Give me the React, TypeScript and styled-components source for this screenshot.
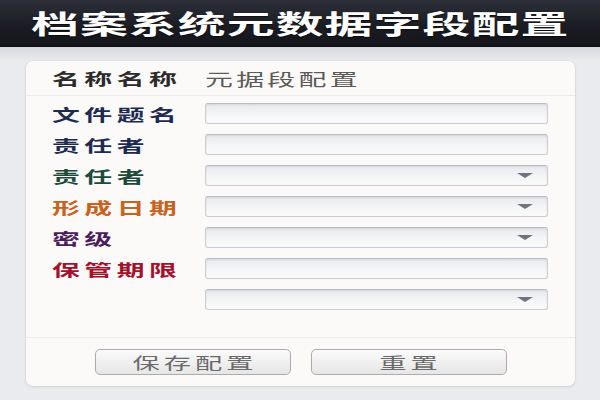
import React from "react";
import styled, { createGlobalStyle } from "styled-components";

const FONT = `"Noto Sans CJK SC", "Noto Sans", sans-serif`;

const GlobalStyle = createGlobalStyle`
  html, body {
    margin: 0;
    padding: 0;
  }
  body {
    width: 600px;
    height: 400px;
    overflow: hidden;
    background: #e9ebef;
    font-family: ${FONT};
  }
`;

interface Field {
  label: string;
  color: string;
  kind: "text" | "select";
}

const fields: Field[] = [
  { label: "文件题名", color: "#1d2a52", kind: "text" },
  { label: "责任者", color: "#1d2a52", kind: "text" },
  { label: "责任者", color: "#1e4a3c", kind: "select" },
  { label: "形成日期", color: "#c8621c", kind: "select" },
  { label: "密级", color: "#4b1d5c", kind: "select" },
  { label: "保管期限", color: "#a3122c", kind: "text" },
  { label: "", color: "#333", kind: "select" },
];

const App: React.FC = () => {
  return (
    <>
      <GlobalStyle />
      <Page>
        <Header>
          <Title>档案系统元数据字段配置</Title>
        </Header>
        <SubBar />
        <Card>
          <NameRow>
            <LabelCell>
              <Label color="#2b2b2b">名称名称</Label>
            </LabelCell>
            <NameValue>元据段配置</NameValue>
          </NameRow>
          <FieldList>
            {fields.map((f, i) => (
              <FieldRow key={i}>
                <LabelCell>
                  {f.label && <Label color={f.color}>{f.label}</Label>}
                </LabelCell>
                <InputBox>{f.kind === "select" && <Arrow />}</InputBox>
              </FieldRow>
            ))}
          </FieldList>
          <Footer>
            <Button>
              <ButtonText>保存配置</ButtonText>
            </Button>
            <Button>
              <ButtonText>重置</ButtonText>
            </Button>
          </Footer>
        </Card>
      </Page>
    </>
  );
};

export default App;

const Page = styled.div`
  display: flex;
  flex-direction: column;
  width: 600px;
  height: 400px;
`;

const Header = styled.div`
  height: 46px;
  flex-shrink: 0;
  display: flex;
  align-items: center;
  justify-content: center;
  background: linear-gradient(#2c2f38, #1a1c22 60%, #15161b);
  border-bottom: 1px solid #0e0f12;
`;

const Title = styled.span`
  display: inline-block;
  color: #ffffff;
  font-size: 26px;
  font-weight: 700;
  letter-spacing: 0.6px;
  padding-left: 0.6px;
  line-height: 1;
  transform: scaleX(1.84);
  text-shadow: 0 1px 1px rgba(0, 0, 0, 0.6);
`;

const SubBar = styled.div`
  height: 14px;
  flex-shrink: 0;
  background: linear-gradient(#d6d8dd, #e9ebef);
`;

const Card = styled.div`
  display: flex;
  flex-direction: column;
  width: 549px;
  height: 325px;
  margin-left: 26px;
  background: #fbfaf8;
  border-radius: 7px;
  box-shadow: 0 1px 3px rgba(0, 0, 0, 0.1), 0 0 0 1px rgba(0, 0, 0, 0.02);
  padding: 0 27px 0 26px;
  box-sizing: border-box;
`;

const NameRow = styled.div`
  display: flex;
  align-items: center;
  height: 34px;
  margin: 0 -27px 0 -26px;
  border-bottom: 1px solid #ebebea;
`;

const LabelCell = styled.div`
  width: 153px;
  flex-shrink: 0;
  padding-left: 26px;
  box-sizing: content-box;
`;

const Label = styled.span<{ color: string }>`
  display: inline-block;
  color: ${(p) => p.color};
  font-size: 16px;
  font-weight: 700;
  line-height: 1;
  letter-spacing: 2.6px;
  transform: scaleX(1.74);
  transform-origin: left center;
`;

const NameValue = styled.span`
  display: inline-block;
  color: #5a5a5a;
  font-size: 17px;
  line-height: 1;
  letter-spacing: 2px;
  transform: scaleX(1.64);
  transform-origin: left center;
`;

const FieldList = styled.div`
  display: flex;
  flex-direction: column;
  gap: 10px;
  padding: 7px 0 27px;
`;

const FieldRow = styled.div`
  display: flex;
  align-items: center;
  height: 21px;
  margin-left: -26px;
`;

const InputBox = styled.div`
  flex: 1;
  height: 21px;
  box-sizing: border-box;
  display: flex;
  align-items: center;
  justify-content: flex-end;
  padding-right: 14px;
  border: 1px solid #c9ccd3;
  border-top-color: #b9bcc4;
  border-radius: 3px;
  background: linear-gradient(#e8e9ed, #f4f5f6 55%, #fafafa);
  box-shadow: inset 0 1px 2px rgba(0, 0, 0, 0.08);
`;

const Arrow = styled.span`
  width: 0;
  height: 0;
  border-left: 8px solid transparent;
  border-right: 8px solid transparent;
  border-top: 5px solid #6f7380;
`;

const Footer = styled.div`
  display: flex;
  justify-content: center;
  gap: 20px;
  margin: 0 -27px 0 -26px;
  padding-top: 11px;
  border-top: 1px solid #ececea;
  flex: 1;
`;

const Button = styled.div`
  width: 196px;
  height: 26px;
  box-sizing: border-box;
  display: flex;
  align-items: center;
  justify-content: center;
  border: 1px solid #a9abb0;
  border-radius: 5px;
  background: linear-gradient(#fbfbfb, #eeeeee 60%, #e6e6e7);
  box-shadow: inset 0 1px 0 rgba(255, 255, 255, 0.8);
`;

const ButtonText = styled.span`
  display: inline-block;
  color: #6a6a6a;
  font-size: 16px;
  line-height: 1;
  letter-spacing: 2.4px;
  padding-left: 2.4px;
  transform: scaleX(1.7);
`;
